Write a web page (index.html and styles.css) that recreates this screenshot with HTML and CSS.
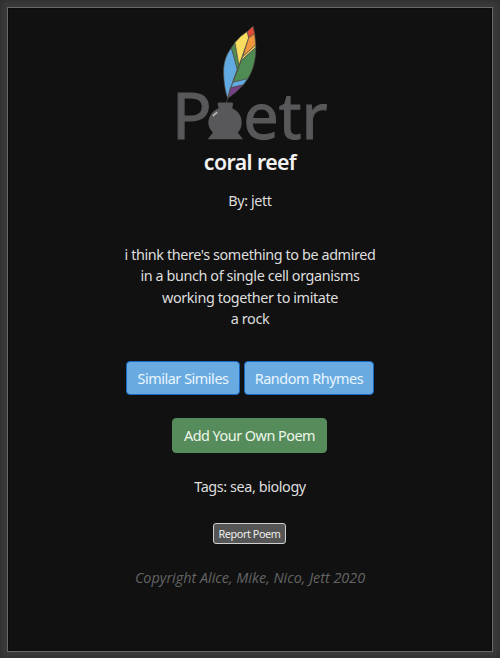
FILE: index.html
```html
<!DOCTYPE html>
<html lang="en">
<head>
<meta charset="utf-8">
<title>Poetr</title>
<link rel="stylesheet" href="styles.css">
</head>
<body>
<main class="page">
  <svg class="logo" viewBox="0 0 540 380" role="img" aria-label="Poetr">
    <g class="wordmark">
      <text x="32" y="371" textLength="120" lengthAdjust="spacingAndGlyphs">P</text>
      <text x="247" y="371" textLength="253" lengthAdjust="spacingAndGlyphs">etr</text>
    </g>
    <path fill="#58585a" d="M174 262H213Q217 262 216 267L214 279C232 287 243 304 242 324C241 338 236 346 230 352L246 372H140L156 352C147 344 142 334 142 323C142 303 155 286 173 279L170 267Q169 262 174 262Z"/>
    <path d="M156 303Q160 296 169 291" fill="none" stroke="#b8b8b8" stroke-width="5"/>
    <g stroke="#53534c" stroke-width="2" stroke-linejoin="round">
      <path fill="#62abe2" d="M211 98C192 125 187 148 188 177C189 207 194 232 200 248L218 193L229 162Z"/>
      <path fill="#4e8c54" d="M211 98L222 82L234 151L229 162Z"/>
      <path fill="#f9dd61" d="M222 82Q237 62 259 49L263 68L234 151Z"/>
      <path fill="#df4937" d="M259 49L276 33L281 56L263 68Z"/>
      <path fill="#ef963e" d="M263 68L281 56L284 89L245 125Z"/>
      <path fill="#f5cf67" d="M245 125L284 89V97L240 137Z"/>
      <path fill="#4e8c54" d="M240 137L284 97C285 132 276 166 260 191L216 201Z"/>
      <path fill="#62abe2" d="M216 201L260 191L247 209L208 218Z"/>
      <path fill="#754187" d="M208 218L247 209Q226 233 200 249Z"/>
      <path fill="none" d="M240 137L218 193L196 262"/>
    </g>
  </svg>
  <h1 class="title">coral reef</h1>
  <p class="author">By: jett</p>
  <div class="poem">
    <p>i think there's something to be admired</p>
    <p>in a bunch of single cell organisms</p>
    <p>working together to imitate</p>
    <p>a rock</p>
  </div>
  <div class="actions">
    <button class="btn similar">Similar Similes</button>
    <button class="btn random">Random Rhymes</button>
  </div>
  <button class="btn add">Add Your Own Poem</button>
  <p class="tags">Tags: sea, biology</p>
  <button class="report">Report Poem</button>
  <footer class="copyright">Copyright Alice, Mike, Nico, Jett 2020</footer>
</main>
</body>
</html>
```
FILE: styles.css
```css
* { box-sizing: border-box; }
body {
  margin: 0;
  height: 658px;
  padding: 7px;
  background: #3b3b3b;
  box-shadow: inset 0 0 7px #292929;
  font: 14.4px/21.6px "Noto Sans", sans-serif;
  letter-spacing: -0.4px;
  color: #dedede;
  overflow: hidden;
}
p, h1 { margin: 0; white-space: nowrap; }
.page {
  height: 645px;
  border: 1px solid #696969;
  background: #111;
  box-shadow: inset 0 0 2px #000;
  display: flex;
  flex-direction: column;
  align-items: center;
  padding-top: 7px;
}
.logo { width: 180px; height: 127px; flex: none; margin-left: 1px; overflow: visible; }
.wordmark { fill: #58585a; stroke: #58585a; stroke-width: 3px; font: 192px "Noto Sans", sans-serif; letter-spacing: 0; }
.title { font-size: 21.3px; line-height: 26px; font-weight: 600; margin-top: 7px; color: #f1f1f1; letter-spacing: -0.6px; }
.author { margin-top: 15px; }
.poem { margin-top: 32px; text-align: center; }
.actions { display: flex; gap: 4px; margin-top: 31px; }
button { font-family: inherit; padding: 0; white-space: nowrap; }
.btn {
  height: 34px;
  border: 1px solid #1767c5;
  border-radius: 4px;
  background: #69abe0;
  color: #eaf5ff;
  font-size: 14.4px;
  letter-spacing: -0.45px;
  padding-top: 2px;
}
.similar { width: 114px; }
.random { width: 130px; }
.add { width: 155px; height: 35px; margin: 23px 1px 0 0; padding-top: 1px; background: #568c5b; border-color: #568c5b; color: #eef6ea; letter-spacing: -0.5px; }
.tags { margin-top: 23px; }
.report {
  width: 73px;
  height: 21px;
  margin: 25px 1px 0 0;
  border: 1px solid #cfcfcf;
  border-radius: 3px;
  background: #555;
  color: #eee;
  font-size: 10.8px;
  letter-spacing: -0.4px;
}
.copyright { margin-top: 23px; color: #646464; font-family: "Open Sans", sans-serif; font-style: italic; letter-spacing: 0; white-space: nowrap; }
```
